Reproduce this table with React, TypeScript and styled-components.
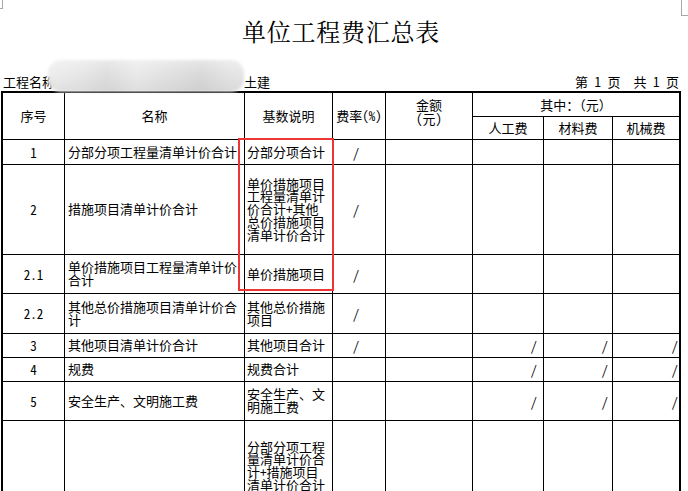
import React from "react";
import styled, { createGlobalStyle } from "styled-components";

const GlobalStyle = createGlobalStyle`
  html, body { margin: 0; padding: 0; background: #ffffff; }
  body {
    font-family: "Noto Sans Mono CJK SC", "Noto Sans CJK SC", sans-serif;
    color: #000000;
  }
`;

const CJK = `"Noto Sans Mono CJK SC", "Noto Sans CJK SC", sans-serif`;

const Page = styled.div`
  position: relative;
  width: 688px;
  height: 491px;
  overflow: hidden;
  background: #ffffff;
`;

const CornerMark = styled.div<{ $side: "left" | "right" }>`
  position: absolute;
  top: 0;
  box-sizing: border-box;
  border-bottom: 1px solid #a8a8a8;
  ${(p) =>
    p.$side === "left"
      ? `left: 0; width: 3px; height: 9px; border-right: 1px solid #a8a8a8;`
      : `left: 681px; width: 7px; height: 16px; border-left: 1px solid #a8a8a8;`}
`;

const Sheet = styled.div`
  margin-left: 1px;
  width: 680px;
  display: flex;
  flex-direction: column;
`;

const Title = styled.h1`
  margin: 0;
  padding-top: 16px;
  height: 30px;
  font-family: "Noto Serif CJK SC", "Noto Sans CJK SC", serif;
  font-size: 24px;
  line-height: 30px;
  font-weight: 400;
  letter-spacing: 0.75px;
  text-align: center;
`;

const InfoRow = styled.div`
  margin-top: 27px;
  height: 18px;
  padding: 0 2px;
  display: flex;
  align-items: center;
  justify-content: space-between;
  font-family: ${CJK};
  font-feature-settings: "hwid";
  font-size: 13px;
  line-height: 18px;
  white-space: pre;
`;

const ProjectLine = styled.div`
  display: flex;
  align-items: center;
`;

const RedactedName = styled.span`
  position: relative;
  display: inline-block;
  width: 189px;
  height: 18px;

  &::before {
    content: "";
    position: absolute;
    left: -7px;
    right: 0;
    top: -13px;
    bottom: -1px;
    border-radius: 13px;
    background:
      linear-gradient(180deg, rgba(255,255,255,0.35) 0%, rgba(255,255,255,0) 45%, rgba(0,0,0,0.05) 100%),
      linear-gradient(90deg, #ededed 0%, #e6e6e6 18%, #dedede 30%, #e9e9e9 45%, #e2e2e2 60%, #d9d9d9 78%, #e3e3e3 92%, #e6e6e6 100%);
    filter: blur(1.5px);
  }
`;

const PageInfo = styled.span`
  letter-spacing: 0;
`;

const Grid = styled.div`
  display: grid;
  grid-template-columns: 61px 179px 87px 52px 86px 70px 68px 66px;
  grid-template-rows: 23px 22px 24px 89px 38px 39px 23px 23px 38px 90px;
  gap: 1px;
  background: #000000;
  border: 2px solid #000000;
  font-family: ${CJK};
  font-feature-settings: "hwid";
  font-size: 13px;
`;

const HeadCell = styled.div<{ $rows?: number; $cols?: number; $padB?: number; $fullWidth?: boolean }>`
  background: #ffffff;
  grid-row: span ${(p) => p.$rows ?? 1};
  grid-column: span ${(p) => p.$cols ?? 1};
  display: flex;
  align-items: center;
  justify-content: center;
  text-align: center;
  line-height: 14px;
  padding-bottom: ${(p) => p.$padB ?? 0}px;
  white-space: nowrap;
  ${(p) => (p.$fullWidth ? `font-feature-settings: normal; font-family: "Noto Sans CJK SC", sans-serif;` : "")}
`;

const NoCell = styled.div`
  background: #ffffff;
  display: flex;
  align-items: center;
  justify-content: center;
`;

const TextCell = styled.div<{ $padL: number; $padR: number }>`
  background: #ffffff;
  display: flex;
  align-items: center;
  padding: 0 ${(p) => p.$padR}px 0 ${(p) => p.$padL}px;
  min-width: 0;
`;

const WrapText = styled.span`
  display: block;
  width: 100%;
  line-height: 12.75px;
  word-break: break-all;
`;

const SlashCell = styled.div<{ $align: "center" | "right"; $padR: number }>`
  background: #ffffff;
  display: flex;
  align-items: center;
  justify-content: ${(p) => (p.$align === "center" ? "center" : "flex-end")};
  padding-right: ${(p) => p.$padR}px;
`;

const RedBox = styled.div`
  position: absolute;
  left: 238px;
  top: 138px;
  width: 96px;
  height: 153px;
  box-sizing: border-box;
  border: 2px solid #ec3636;
  pointer-events: none;
`;

type Row = {
  no: string;
  name: string;
  base: string;
  rate: string;
  parts: boolean;
};

const rows: Row[] = [
  { no: "1", name: "分部分项工程量清单计价合计", base: "分部分项合计", rate: "/", parts: false },
  {
    no: "2",
    name: "措施项目清单计价合计",
    base: "单价措施项目工程量清单计价合计+其他总价措施项目清单计价合计",
    rate: "/",
    parts: false,
  },
  { no: "2.1", name: "单价措施项目工程量清单计价合计", base: "单价措施项目", rate: "/", parts: false },
  { no: "2.2", name: "其他总价措施项目清单计价合计", base: "其他总价措施项目", rate: "/", parts: false },
  { no: "3", name: "其他项目清单计价合计", base: "其他项目合计", rate: "/", parts: true },
  { no: "4", name: "规费", base: "规费合计", rate: "", parts: true },
  { no: "5", name: "安全生产、文明施工费", base: "安全生产、文明施工费", rate: "", parts: true },
  {
    no: "",
    name: "",
    base: "分部分项工程量清单计价合计+措施项目清单计价合计",
    rate: "",
    parts: false,
  },
];

const partPads = [6, 4, 1];

export default function App() {
  return (
    <Page>
      <GlobalStyle />
      <CornerMark $side="left" />
      <CornerMark $side="right" />
      <Sheet>
        <Title>单位工程费汇总表</Title>
        <InfoRow>
          <ProjectLine>
            <span>工程名称</span>
            <RedactedName />
            <span>土建</span>
          </ProjectLine>
          <PageInfo>{"第 1 页  共 1 页"}</PageInfo>
        </InfoRow>
        <Grid>
          <HeadCell $rows={2}>序号</HeadCell>
          <HeadCell $rows={2}>名称</HeadCell>
          <HeadCell $rows={2}>基数说明</HeadCell>
          <HeadCell $rows={2}>费率(%)</HeadCell>
          <HeadCell $rows={2} $padB={9}>
            金额
            <br />
            (元)
          </HeadCell>
          <HeadCell $cols={3} $fullWidth>
            其中：（元）
          </HeadCell>
          <HeadCell>人工费</HeadCell>
          <HeadCell>材料费</HeadCell>
          <HeadCell>机械费</HeadCell>

          {rows.map((r, i) => (
            <React.Fragment key={i}>
              <NoCell>{r.no}</NoCell>
              <TextCell $padL={3} $padR={1}>
                <WrapText>{r.name}</WrapText>
              </TextCell>
              <TextCell $padL={2} $padR={3}>
                <WrapText>{r.base}</WrapText>
              </TextCell>
              <SlashCell $align="center" $padR={6}>
                {r.rate}
              </SlashCell>
              <SlashCell $align="right" $padR={0} />
              {partPads.map((pad, j) => (
                <SlashCell key={j} $align="right" $padR={pad}>
                  {r.parts ? "/" : ""}
                </SlashCell>
              ))}
            </React.Fragment>
          ))}
        </Grid>
      </Sheet>
      <RedBox />
    </Page>
  );
}
